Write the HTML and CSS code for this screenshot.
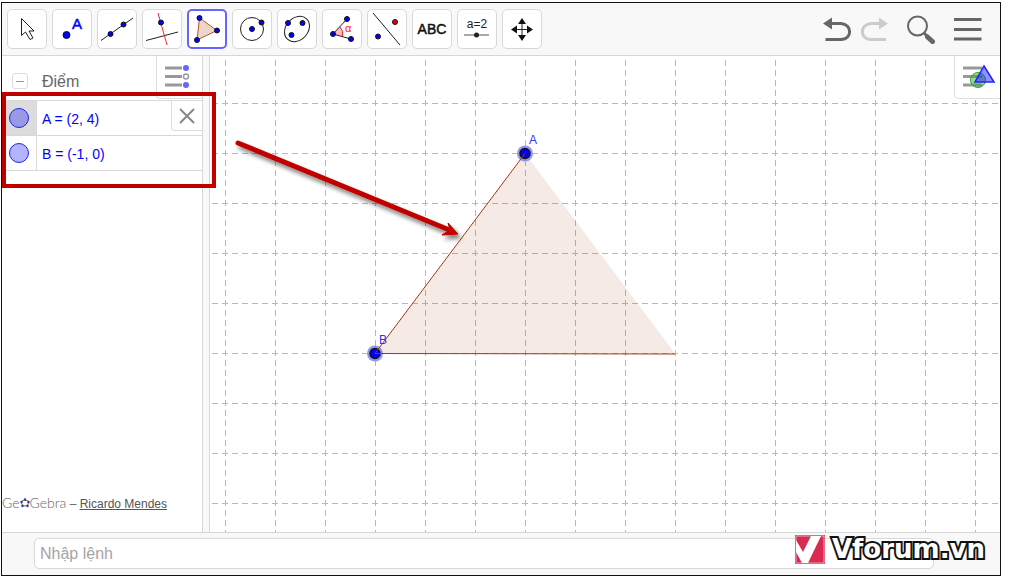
FILE: index.html
```html
<!DOCTYPE html>
<html lang="vi">
<head>
<meta charset="utf-8">
<meta name="viewport" content="width=device-width, initial-scale=1">
<title>GeoGebra</title>
<link rel="stylesheet" href="styles.css">
</head>
<body>
<div class="app">
  <header class="toolbar">
    <div class="tools">
      <button class="tool" aria-label="Move"><svg viewBox="1 1 38 38"><path d="M14.500 9.500v17l4-3.500 4.500 7.500 3-1.500-4-7h5z" fill="#fff" stroke="#222"/></svg></button>
      <button class="tool" aria-label="Point"><svg viewBox="1 1 38 38"><circle class="pt" cx="14.500" cy="26" r="3.500"/><text class="letter" x="20" y="20">A</text></svg></button>
      <button class="tool" aria-label="Line"><svg viewBox="1 1 38 38"><path d="M4 31.500 36 9" class="ink"/><circle class="pt" cx="13.500" cy="25" r="2.500"/><circle class="pt" cx="26.500" cy="15.500" r="2.500"/></svg></button>
      <button class="tool" aria-label="Perpendicular line"><svg viewBox="1 1 38 38"><path d="M4 31.500 36 23" class="ink"/><path d="M16 4 25 36" stroke="#f22"/><circle class="pt" cx="19" cy="13.500" r="2.500"/></svg></button>
      <button class="tool selected" aria-label="Polygon" aria-pressed="true"><svg viewBox="2 2 36 36"><path d="M12.500 9 30 21.500 10 31z" fill="#ecd5c9" stroke="#b8562c"/><circle class="pt" cx="12.500" cy="9" r="2.500"/><circle class="pt" cx="30" cy="21.500" r="2.500"/><circle class="pt" cx="10" cy="31" r="2.500"/></svg></button>
      <button class="tool" aria-label="Circle"><svg viewBox="1 1 38 38"><circle class="ink" cx="20" cy="20" r="11.500"/><circle class="pt" cx="20" cy="20" r="2.500"/><circle class="pt" cx="29.500" cy="13.500" r="2.500"/></svg></button>
      <button class="tool" aria-label="Ellipse"><svg viewBox="1 1 38 38"><ellipse class="ink" cx="20" cy="20" rx="14" ry="11" transform="rotate(-47 20 20)"/><circle class="pt" cx="11" cy="14" r="2.500"/><circle class="pt" cx="25.500" cy="14" r="2.500"/><circle class="pt" cx="14.500" cy="26" r="2.500"/></svg></button>
      <button class="tool" aria-label="Angle"><svg viewBox="1 1 38 38"><path d="M11 25 18 18Q22 22 20.500 27.500z" fill="#fbb"/><path d="M18 18Q22 22 20.500 27.500" fill="none" stroke="#f22"/><path class="ink" d="M25 10 11 25 29 30"/><circle class="pt" cx="25" cy="10" r="2.500"/><circle class="pt" cx="11" cy="25" r="2.500"/><circle class="pt" cx="29" cy="30" r="2.500"/><text class="alpha" x="23" y="23">α</text></svg></button>
      <button class="tool" aria-label="Reflect"><svg viewBox="1 1 38 38"><path class="ink" d="M6 4 33 36"/><circle class="pt" cx="11" cy="27.500" r="2.500"/><circle class="pt red" cx="28" cy="13" r="2.500"/></svg></button>
      <button class="tool abc">ABC</button>
      <button class="tool" aria-label="Slider"><svg viewBox="1 1 38 38"><text class="slider-text" x="20" y="19">a=2</text><path d="M7 26H32" stroke="#555"/><circle cx="19.500" cy="26" r="2.500" fill="#222"/></svg></button>
      <button class="tool" aria-label="Move view"><svg viewBox="1 1 38 38"><path d="M20 12V29M12 20.500H29" class="ink"/><path d="M20 9l4 6h-8zM20 32l4-6h-8zM9 20.500l6-4v8zM31 20.500l-6-4v8z" fill="#111"/></svg></button>
    </div>
    <div class="actions">
      <button class="action" aria-label="Undo"><svg viewBox="0 0 30 30"><path d="M8 9.500H18C29.500 10 29.500 25.500 18 25.500H2.500" fill="none" stroke="#666" stroke-width="3"/><path d="M0 9.500 9 3.500V15.500z" fill="#666"/></svg></button>
      <button class="action" aria-label="Redo"><svg viewBox="0 0 30 30"><path d="M19 9.500H10C-1.500 10-1.500 25.500 10 25.500H25" fill="none" stroke="#ccc" stroke-width="3"/><path d="M27 9.500 18 3.500V15.500z" fill="#ccc"/></svg></button>
      <button class="action search" aria-label="Search"><svg viewBox="0 0 30 30"><circle cx="10.500" cy="12" r="9.500" fill="none" stroke="#666" stroke-width="2"/><path d="M17 19 21 23" stroke="#666" stroke-width="3"/><path d="M20.500 23 25.500 27.500" stroke="#666" stroke-width="5" stroke-linecap="round"/></svg></button>
      <button class="action menu" aria-label="Menu"><svg viewBox="0 0 30 30"><path d="M1 5.500H28.500M1 15.500H28.500M1 25H28.500" stroke="#666" stroke-width="3"/></svg></button>
    </div>
  </header>

  <main class="workspace">
    <aside class="algebra">
      <div class="group">
        <button class="collapse" aria-label="Collapse"></button>
        <h2 class="group-title">Điểm</h2>
        <button class="style-toggle" aria-label="Style bar"><svg viewBox="0 0 26 24"><path d="M1 3H18M1 11.500H18M1 20H18" stroke="#999" stroke-width="3"/><circle cx="22" cy="3" r="3" fill="#66f"/><circle cx="22" cy="11.500" r="2.500" fill="#fff" stroke="#999" stroke-width="1.500"/><circle cx="22" cy="20" r="3" fill="#66f"/></svg></button>
      </div>
      <ul class="objects">
        <li class="object active"><button class="marble-cell" aria-label="Show A"><span class="marble"></span></button><span class="value">A = (2, 4)</span><button class="remove" aria-label="Delete A"><svg viewBox="0 0 16 16"><path d="M1 1 15 15M15 1 1 15" stroke="#888" stroke-width="2"/></svg></button></li>
        <li class="object"><button class="marble-cell" aria-label="Show B"><span class="marble"></span></button><span class="value">B = (-1, 0)</span></li>
      </ul>
      <p class="credit"><span class="brand">Ge<svg class="brand-o" viewBox="0 0 10 10"><ellipse cx="5" cy="5" rx="3.500" ry="3" fill="none" stroke="#666"/><g fill="#339"><circle cx="5" cy="1.500" r="1.200"/><circle cx="8.500" cy="4" r="1.200"/><circle cx="7.500" cy="8" r="1.200"/><circle cx="2.500" cy="8" r="1.200"/><circle cx="1.500" cy="4" r="1.200"/></g></svg>Gebra</span> – <a href="#">Ricardo Mendes</a></p>
    </aside>
    <div class="splitter"></div>
    <section class="graphics">
      <svg class="plane" role="img" aria-label="Triangle through A and B">
        <defs>
          <pattern id="grid" x="15" y="-3" width="50" height="50" patternUnits="userSpaceOnUse"><path d="M.5 0V50" class="grid-line"/><path d="M0 .5H50" class="grid-line"/></pattern>
          <filter id="shade" x="-10%" y="-20%" width="120%" height="150%"><feDropShadow dx="3" dy="4" stdDeviation="2" flood-color="#000" flood-opacity=".5"/></filter>
        </defs>
        <rect width="100%" height="100%" fill="url(#grid)"/>
        <path d="M315 97.500 465 297.500H165z" fill="#993300" fill-opacity=".1"/>
        <g class="vertex"><circle class="halo" cx="315" cy="97.500" r="8"/><circle class="dot" cx="315" cy="97.500" r="5"/><circle class="halo" cx="165" cy="297.500" r="8"/><circle class="dot" cx="165" cy="297.500" r="5"/></g>
        <path d="M315 97.500 165 297.500 465 298" fill="none" stroke="#a03c0c"/>
        <text class="label" x="319" y="88">A</text>
        <text class="label" x="169" y="288">B</text>
      </svg>
      <button class="view-toggle" aria-label="Graphics style bar"><svg viewBox="0 0 34 26"><path d="M1 4H20M1 12.500H20M1 21H20" stroke="#999" stroke-width="3"/><circle cx="16" cy="16" r="7.500" fill="#3a3" fill-opacity=".5" stroke="#2a2"/><path d="M22 2 32 18H13z" fill="#22f" fill-opacity=".5" stroke="#22f" stroke-width="1.500"/></svg></button>
    </section>
    <div class="highlight"></div>
    <svg class="arrow" viewBox="0 0 240 120"><g filter="url(#shade)" fill="#c00000"><path d="M9 12 218 98" stroke="#c00000" stroke-width="5" stroke-linecap="round"/><path d="M229 103 219 92 221 99 213 104z" stroke="#c00000"/></g></svg>
  </main>

  <footer class="input-bar">
    <input class="command" type="text" placeholder="Nhập lệnh" aria-label="Nhập lệnh">
    <div class="watermark"><svg class="mark" viewBox="0 0 30 29"><rect width="30" height="29" fill="#d92b50"/><rect x="1" y="1" width="28" height="27" fill="none" stroke="#f5a5b6"/><path d="M1 5 8 17 16 1h10L13 28H7L1 17z" fill="#fff"/></svg><span class="mark-text">Vforum.vn</span></div>
  </footer>
</div>
</body>
</html>
```
FILE: styles.css
```css
* { box-sizing: border-box; }

body {
  margin: 0;
  padding: 2px 11px 4px 1px;
  min-height: 100vh;
  display: flex;
  background: #fff;
  font-family: "Liberation Sans", Arial, sans-serif;
}

button { margin: 0; padding: 0; border: 0; background: none; font: inherit; }
svg { display: block; }

.app {
  flex: 1;
  min-width: 0;
  display: flex;
  flex-direction: column;
  border: 1px solid #111;
}

.toolbar {
  display: flex;
  justify-content: space-between;
  align-items: center;
  padding: 6px 17px 6px 5px;
  background: #f8f8f8;
  border-bottom: 1px solid #d6d6d6;
}

.tools { display: flex; gap: 5px; }
.tool {
  width: 40px;
  height: 40px;
  background: #fff;
  border: 1px solid #d8d8d8;
  border-radius: 5px;
}
.tool svg { width: 38px; height: 38px; }
.tool.selected { border: 2px solid #6666ff; }
.tool.selected svg { width: 36px; height: 36px; }
.tool.abc { font-size: 14px; color: #111; -webkit-text-stroke: 0.5px #111; }
.pt { fill: #00f; stroke: #111; }
.red { fill: #e00; }
.ink { fill: none; stroke: #222; }
.letter { font-size: 15px; fill: #00f; stroke: #00f; stroke-width: 0.5px; }
.alpha { font-size: 11px; fill: #f22; }
.slider-text { font-size: 12px; fill: #222; text-anchor: middle; }

.actions { display: flex; align-items: center; gap: 8px; }
.action svg { width: 30px; height: 30px; }
.search { margin-left: 8px; }
.menu { margin-left: 8px; }

.workspace { flex: 1; display: flex; position: relative; }

.algebra { width: 200px; display: flex; flex-direction: column; }
.group { display: flex; align-items: center; height: 44px; padding-left: 10px; }
.collapse {
  display: flex;
  align-items: center;
  justify-content: center;
  width: 16px;
  height: 16px;
  margin-top: 6px;
  border: 1px solid #ddd;
  border-radius: 3px;
}
.collapse::before { content: ""; width: 8px; height: 1px; background: #999; }
.group-title {
  flex: 1;
  margin: 8px 0 0 14px;
  font-size: 16px;
  font-weight: 400;
  color: #666;
}
.style-toggle {
  align-self: flex-start;
  width: 46px;
  height: 43px;
  padding: 0 0 1px 7px;
  border-left: 1px solid #ddd;
  border-bottom: 1px solid #ddd;
  border-bottom-left-radius: 4px;
}
.style-toggle svg { width: 26px; height: 24px; }

.objects { margin: 0; padding: 0; list-style: none; border-top: 1px solid #d8d8d8; }
.object { display: flex; height: 35px; border-bottom: 1px solid #d8d8d8; }
.marble-cell {
  display: flex;
  align-items: center;
  justify-content: center;
  width: 35px;
  border-right: 1px solid #d8d8d8;
}
.active .marble-cell { background: #dcdcdc; }
.marble { width: 20px; height: 20px; border: 1px solid #2222ee; border-radius: 50%; background: #b3b3ff; }
.active .marble { background: #9999e6; }
.value { flex: 1; padding-left: 5px; font-size: 14px; line-height: 37px; color: #00f; }
.remove {
  display: flex;
  align-items: center;
  justify-content: center;
  width: 31px;
  height: 30px;
  border: 1px solid #ddd;
  border-width: 0 0 1px 1px;
  border-bottom-left-radius: 4px;
}
.remove svg { width: 16px; height: 16px; }

.credit { margin: auto 0 20px; font-size: 12px; line-height: 16px; color: #666; white-space: nowrap; }
.credit a { color: #555; }
.brand { font-family: Lato, sans-serif; font-size: 14px; font-weight: 300; }
.brand-o { display: inline-block; width: 10px; height: 10px; }

.splitter { width: 8px; background: #f8f8f8; border: 1px solid #d8d8d8; border-width: 0 1px; }

.graphics { flex: 1; position: relative; min-width: 0; min-height: 476px; overflow: hidden; }
.plane { position: absolute; inset: 0; width: 100%; height: 100%; }
.grid-line { fill: none; stroke: #b8b8b8; stroke-dasharray: 6 4; stroke-dashoffset: 3; }
.halo { fill: #9393f2; }
.dot { fill: #00f; stroke: #111; stroke-width: 1.5px; }
.label { font-size: 12px; fill: #33f; }
.view-toggle {
  position: absolute;
  top: 0;
  right: 0;
  width: 46px;
  height: 43px;
  padding-left: 7px;
  background: #fff;
  border: 1px solid #ddd;
  border-width: 0 0 1px 1px;
  border-bottom-left-radius: 5px;
}
.view-toggle svg { width: 34px; height: 26px; }

.highlight { position: absolute; left: 0; top: 36px; width: 214px; height: 96px; border: 4px solid #c00000; }
.arrow { position: absolute; left: 227px; top: 75px; width: 240px; height: 120px; }

.input-bar {
  position: relative;
  padding: 5px 66px 6px 32px;
  background: #f8f8f8;
  border-top: 1px solid #d6d6d6;
}
.command {
  display: block;
  width: 100%;
  height: 31px;
  padding: 0 5px;
  border: 1px solid #d8d8d8;
  border-radius: 5px;
  background: #fff;
  font: 16px "Liberation Sans", Arial, sans-serif;
}
.command::placeholder { color: #a5a5a5; }
.watermark { position: absolute; right: 15px; top: 0; display: flex; align-items: center; gap: 7px; }
.mark { width: 30px; height: 29px; }
.mark-text {
  font: 900 26px/32px "DejaVu Sans", sans-serif;
  color: #fff;
  -webkit-text-stroke: 4px #111;
  paint-order: stroke fill;
}
```
